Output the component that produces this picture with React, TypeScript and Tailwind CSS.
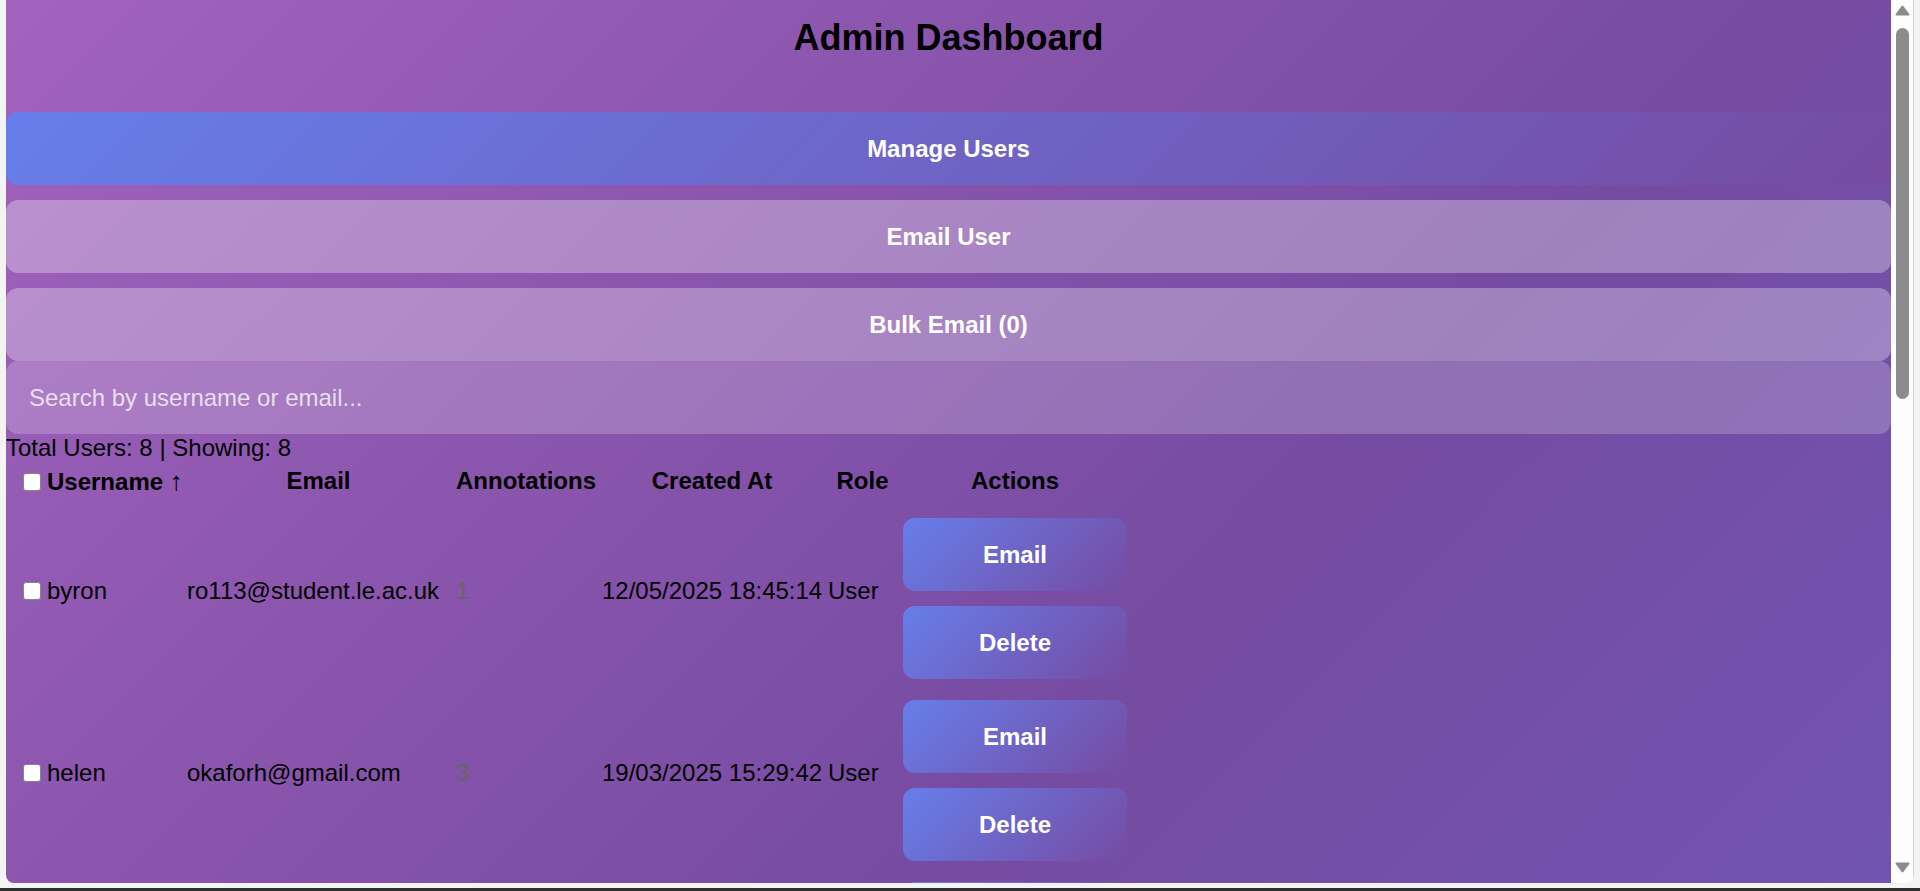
import React from 'react';

interface UserRow {
  username: string;
  email: string;
  annotations: number;
  createdAt: string;
  role: string;
}

const users: UserRow[] = [
  { username: 'byron', email: 'ro113@student.le.ac.uk', annotations: 1, createdAt: '12/05/2025 18:45:14', role: 'User' },
  { username: 'helen', email: 'okaforh@gmail.com', annotations: 3, createdAt: '19/03/2025 15:29:42', role: 'User' },
  { username: 'james', email: 'jw412@student.le.ac.uk', annotations: 0, createdAt: '02/03/2025 10:12:05', role: 'User' },
  { username: 'admin', email: 'admin@annotate.le.ac.uk', annotations: 12, createdAt: '14/02/2025 09:01:33', role: 'Admin' },
  { username: 'maria', email: 'maria.k@outlook.com', annotations: 5, createdAt: '11/02/2025 16:40:21', role: 'User' },
  { username: 'tom', email: 'tb203@student.le.ac.uk', annotations: 2, createdAt: '08/02/2025 12:22:48', role: 'User' },
  { username: 'priya', email: 'priya.s@gmail.com', annotations: 7, createdAt: '30/01/2025 14:05:10', role: 'User' },
  { username: 'daniel', email: 'dn88@student.le.ac.uk', annotations: 0, createdAt: '21/01/2025 08:55:02', role: 'User' },
];

const cols = 'grid grid-cols-[158px_263px_140px_220px_69px_224px] gap-x-[6px]';
const actionBtn =
  'h-[73px] w-full rounded-[12px] bg-[linear-gradient(135deg,#667eea_0%,#764ba2_100%)] text-white font-bold text-[24px]';

const Checkbox: React.FC = () => (
  <input
    type="checkbox"
    className="appearance-none m-0 shrink-0 w-[18px] h-[18px] bg-white border border-[#858585] rounded-[3px]"
  />
);

const Scrollbar: React.FC = () => (
  <div className="w-[22px] shrink-0 bg-[#fdfdfd] border-r border-[#d4d4d4] box-content flex flex-col items-center pt-[5px] pb-[10px]">
    <svg width="15" height="11" viewBox="0 0 15 11">
      <path d="M7.5 1.5 L13.5 9.5 L1.5 9.5 Z" fill="#8c8c8c" stroke="#8c8c8c" strokeWidth="2" strokeLinejoin="round" />
    </svg>
    <div className="mt-[12px] w-[13px] h-[371px] rounded-full bg-[#8c8c8c]" />
    <div className="flex-1" />
    <svg width="15" height="11" viewBox="0 0 15 11">
      <path d="M1.5 1.5 L13.5 1.5 L7.5 9.5 Z" fill="#8c8c8c" stroke="#8c8c8c" strokeWidth="2" strokeLinejoin="round" />
    </svg>
  </div>
);

const App: React.FC = () => {
  return (
    <div className="w-[1920px] h-[891px] bg-[#f4f4f4] flex flex-col overflow-hidden font-['Liberation_Sans',Arial,sans-serif]">
      <div className="ml-[6px] w-[1908px] h-[883px] flex rounded-b-[8px] overflow-hidden">
        <main className="w-[1885px] h-full overflow-hidden bg-[linear-gradient(135deg,#a263be_0%,#8a55ad_35%,#764ba2_65%,#7154b1_100%)] text-black text-[24px]">
          <h1 className="pt-[17px] text-center text-[36px] leading-[41px] font-bold">Admin Dashboard</h1>

          <div className="mt-[54px] flex flex-col">
            <button className="h-[73px] w-full rounded-[12px] bg-[linear-gradient(135deg,#667eea_0%,#764ba2_100%)] text-white font-bold text-[24px]">
              Manage Users
            </button>
            <button className="mt-[15px] h-[73px] w-full rounded-[12px] bg-white/30 text-white font-bold text-[24px]">
              Email User
            </button>
            <button className="mt-[15px] h-[73px] w-full rounded-[12px] bg-white/30 text-white font-bold text-[24px]">
              Bulk Email (0)
            </button>
            <input
              type="text"
              placeholder="Search by username or email..."
              className="h-[73px] w-full rounded-[12px] bg-white/20 pl-[23px] text-[24px] text-white placeholder:text-white/75 outline-none"
            />
          </div>

          <p className="leading-[28px]">Total Users: 8 | Showing: 8</p>

          <div className="pl-[17px]">
            <div className={`${cols} mt-[5px] font-bold leading-[28px]`}>
              <div className="flex items-center gap-[6px] whitespace-nowrap">
                <Checkbox />
                <span>
                  Username <span className="font-normal text-[26px]">↑</span>
                </span>
              </div>
              <div className="text-center">Email</div>
              <div className="text-center">Annotations</div>
              <div className="text-center">Created At</div>
              <div className="text-center">Role</div>
              <div className="text-center">Actions</div>
            </div>

            <div className="mt-[10px]">
              {users.map((u) => (
                <div key={u.username} className={`${cols} items-center leading-[28px]`}>
                  <div className="mb-[12px] flex items-center gap-[6px]">
                    <Checkbox />
                    <span>{u.username}</span>
                  </div>
                  <div className="mb-[12px] whitespace-nowrap">{u.email}</div>
                  <div className="mb-[12px] text-[#666]">{u.annotations}</div>
                  <div className="mb-[12px] whitespace-nowrap">{u.createdAt}</div>
                  <div className="mb-[12px]">{u.role}</div>
                  <div className="flex flex-col gap-[15px] pt-[12px] pb-[9px]">
                    <button className={actionBtn}>Email</button>
                    <button className={actionBtn}>Delete</button>
                  </div>
                </div>
              ))}
            </div>
          </div>
        </main>
        <Scrollbar />
      </div>
      <div className="h-[5px]" />
      <div className="h-[3px] bg-[#2f2f2f]" />
    </div>
  );
};

export default App;
